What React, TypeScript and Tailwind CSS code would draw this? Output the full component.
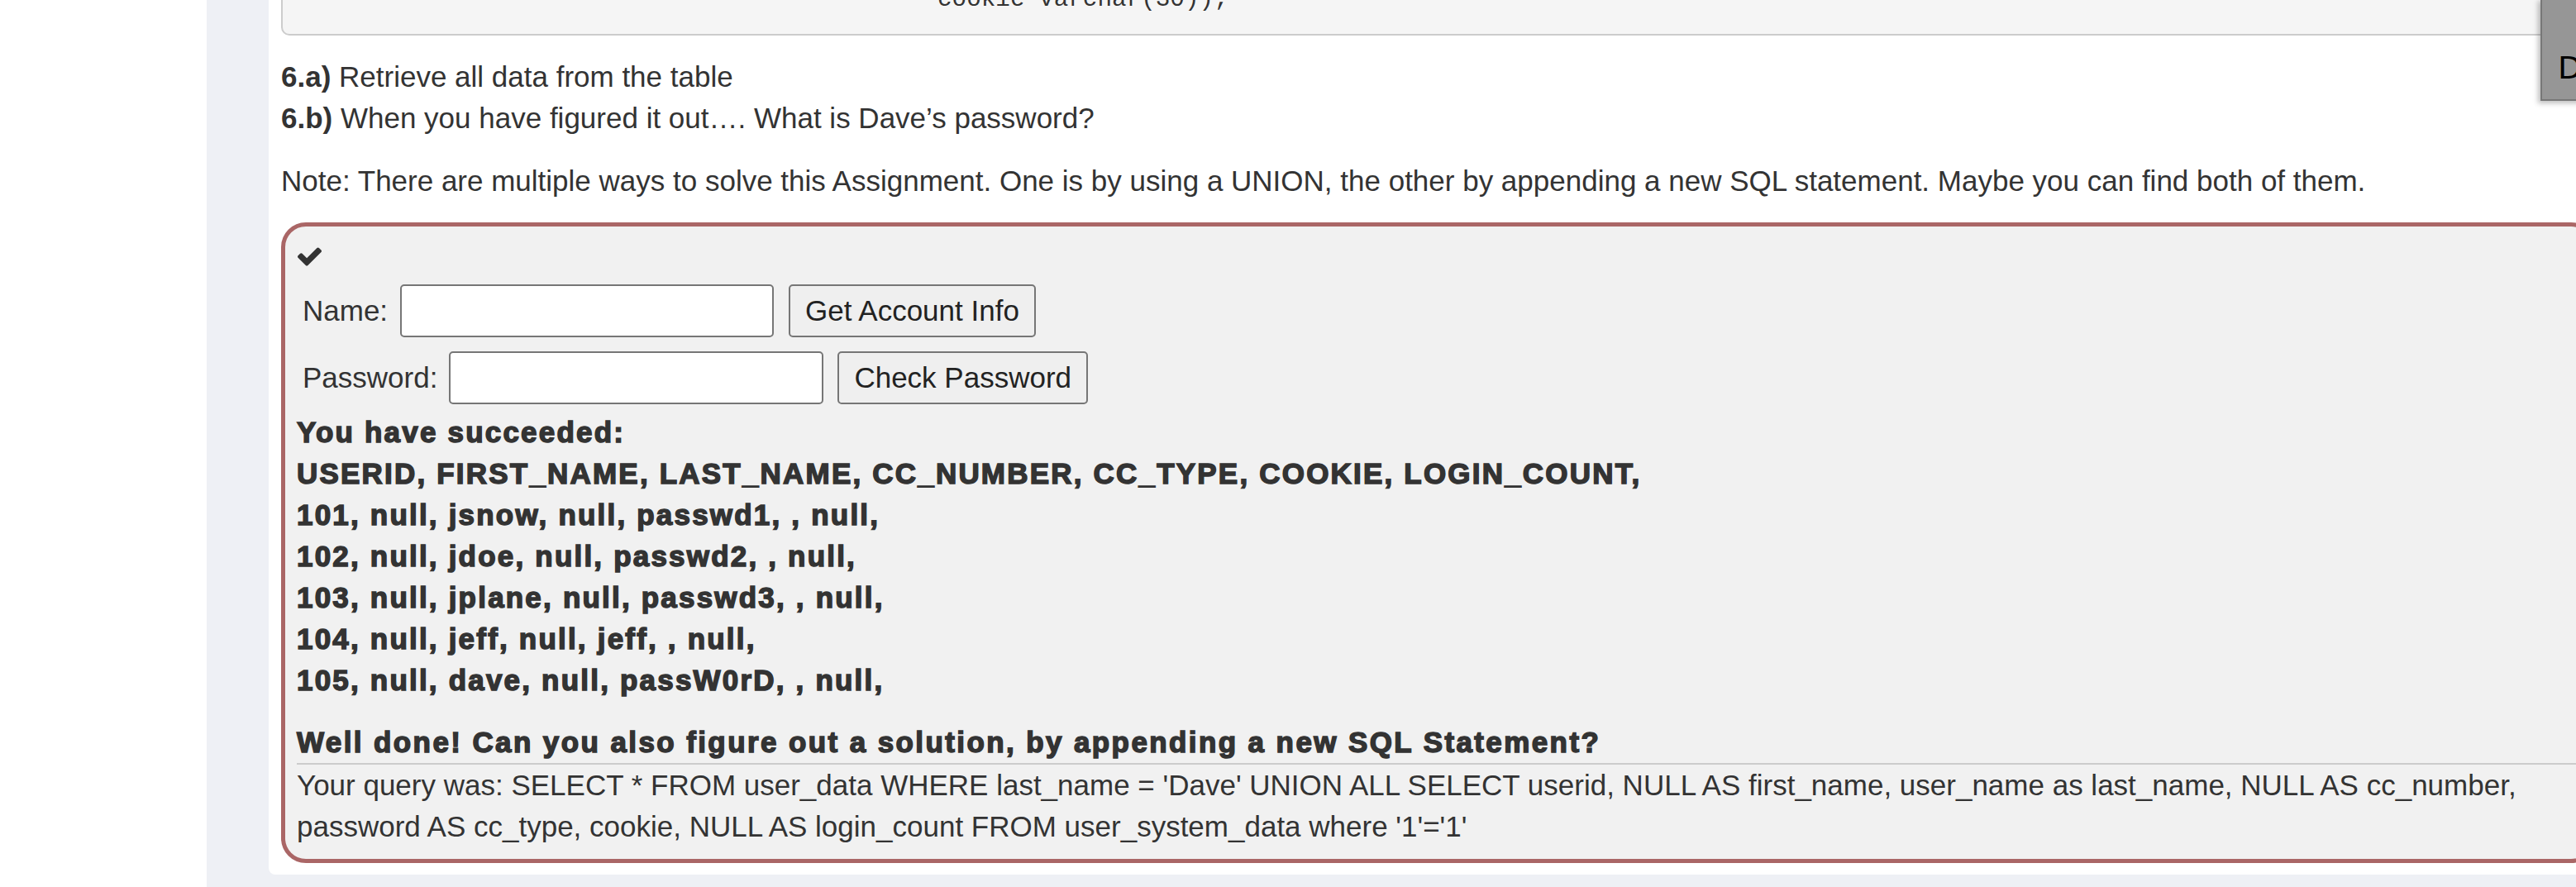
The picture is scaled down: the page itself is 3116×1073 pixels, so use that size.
import React from "react";

function CheckIcon() {
  return (
    <svg viewBox="121 334 1550 1188" className="h-[23px] w-[29px]" fill="#333">
      <path d="M1671 566q0 40-28 68l-724 724-136 136q-28 28-68 28t-68-28l-136-136-362-362q-28-28-28-68t28-68l136-136q28-28 68-28t68 28l294 295 656-657q28-28 68-28t68 28l136 136q28 28 28 68z" />
    </svg>
  );
}

const rows = [
  "101, null, jsnow, null, passwd1, , null,",
  "102, null, jdoe, null, passwd2, , null,",
  "103, null, jplane, null, passwd3, , null,",
  "104, null, jeff, null, jeff, , null,",
  "105, null, dave, null, passW0rD, , null,",
];

const heavy =
  "font-bold tracking-[2.2px] [-webkit-text-stroke:1.5px_#333]";

export default function App() {
  return (
    <div className="relative h-[1073px] w-[3116px] overflow-hidden bg-[#eef0f5] font-['Liberation_Sans',Arial,sans-serif] text-[35px] leading-[50px] text-[#333]">
      <div className="flex h-full items-start">
        <div className="h-full w-[250px] shrink-0 bg-white" />
        <div className="shrink-0 pl-[75px]">
          <div className="w-[2830px] rounded-b-[8px] bg-white px-[15px] pb-[14px]">
            <div className="-mt-[49px] mb-[25px] whitespace-pre rounded-[10px] border-2 border-[#cccccc] bg-[#f5f5f5] pt-[24px] pb-[18px] pl-[792px] font-['Liberation_Mono',monospace] text-[29.3px] leading-[46px] text-[#333]">
              cookie varchar(30));
            </div>

            <p className="mb-[26px]">
              <b>6.a)</b> Retrieve all data from the table
              <br />
              <b>6.b)</b> When you have figured it out…. What is Dave’s password?
            </p>
            <p className="mb-[25px]">
              Note: There are multiple ways to solve this Assignment. One is by using a UNION, the other by
              appending a new SQL statement. Maybe you can find both of them.
            </p>

            <div className="rounded-[30px] border-[5px] border-[#aa6666] bg-[#f1f1f1] px-[14px] pb-[14px]">
              <div className="h-[63px] pt-[25px] pl-[1px]">
                <CheckIcon />
              </div>

              <div className="flex h-[78px] items-center">
                <span className="pl-[7px] pr-[15px]">Name:</span>
                <input
                  type="text"
                  className="h-[64px] w-[452px] rounded-[5px] border-2 border-[#767676] bg-white"
                />
                <button className="ml-[18px] h-[64px] rounded-[5px] border-2 border-[#767676] bg-[#efefef] px-[18px] text-[35px] text-[#222]">
                  Get Account Info
                </button>
              </div>

              <div className="flex h-[83px] items-center">
                <span className="pl-[7px] pr-[14px]">Password:</span>
                <input
                  type="text"
                  className="h-[64px] w-[453px] rounded-[5px] border-2 border-[#767676] bg-white"
                />
                <button className="ml-[17px] h-[64px] rounded-[5px] border-2 border-[#767676] bg-[#efefef] px-[18px] text-[35px] text-[#222]">
                  Check Password
                </button>
              </div>

              <div className={heavy}>
                <div>You have succeeded:</div>
                <div>USERID, FIRST_NAME, LAST_NAME, CC_NUMBER, CC_TYPE, COOKIE, LOGIN_COUNT,</div>
                {rows.map((r) => (
                  <div key={r}>{r}</div>
                ))}
                <div className="mt-[25px] tracking-[2.4px]">
                  Well done! Can you also figure out a solution, by appending a new SQL Statement?
                </div>
              </div>

              <div className="border-t-2 border-[#cccccc]">
                Your query was: SELECT * FROM user_data WHERE last_name = 'Dave' UNION ALL SELECT userid, NULL
                AS first_name, user_name as last_name, NULL AS cc_number, password AS cc_type, cookie, NULL AS
                login_count FROM user_system_data where '1'='1'
              </div>
            </div>
          </div>
        </div>
      </div>

      <div className="absolute left-[3073px] top-[-2px] h-[124px] w-[80px] border-2 border-[#777777] bg-[#969696] pl-[19px] pt-[63px] font-['DejaVu_Sans',sans-serif] text-[38px] leading-[38px] text-black shadow-[-3px_3px_6px_rgba(0,0,0,0.25)]">
        D
      </div>
    </div>
  );
}
